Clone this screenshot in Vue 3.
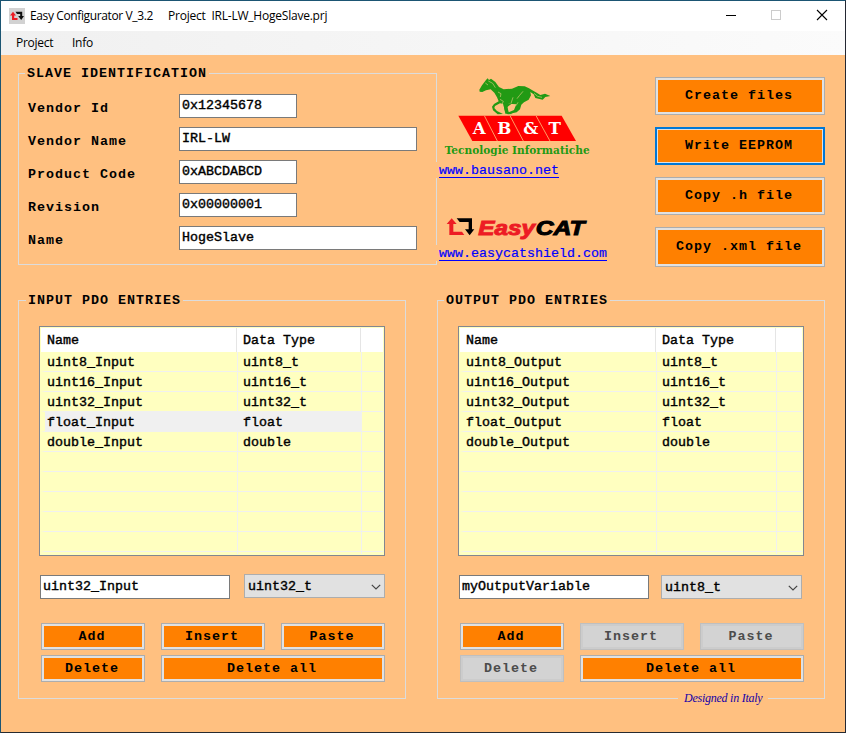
<script setup>
const fields = [
  { label: 'Vendor Id', value: '0x12345678', wide: false },
  { label: 'Vendor Name', value: 'IRL-LW', wide: true },
  { label: 'Product Code', value: '0xABCDABCD', wide: false },
  { label: 'Revision', value: '0x00000001', wide: false },
  { label: 'Name', value: 'HogeSlave', wide: true },
]

const actions = [
  { text: 'Create files' },
  { text: 'Write EEPROM', focused: true },
  { text: 'Copy .h file' },
  { text: 'Copy .xml file', tall: true },
]

const types = [
  ['uint8', 'uint8_t'],
  ['uint16', 'uint16_t'],
  ['uint32', 'uint32_t'],
  ['float', 'float'],
  ['double', 'double'],
]

function buildRows(suffix) {
  const rows = types.map(([n, t]) => ({ name: `${n}_${suffix}`, type: t }))
  while (rows.length < 10) rows.push({ name: '', type: '' })
  return rows
}

const groups = [
  {
    key: 'input', title: 'INPUT PDO ENTRIES', rows: buildRows('Input'), selected: 3,
    variable: 'uint32_Input', type: 'uint32_t', disabled: [],
  },
  {
    key: 'output', title: 'OUTPUT PDO ENTRIES', rows: buildRows('Output'), selected: -1,
    variable: 'myOutputVariable', type: 'uint8_t', disabled: ['Insert', 'Paste', 'Delete'],
  },
]
const buttons = ['Add', 'Insert', 'Paste', 'Delete', 'Delete all']
</script>

<template>
  <div class="window">
    <header class="titlebar">
      <svg class="app-icon" viewBox="0 0 16 16">
        <rect width="16" height="16" fill="#d2d2d2" />
        <path d="M1 7.5 4 3.8 7 7.5H5.2v2.6H8.5V12H3V7.5z" fill="#ed1c24" />
        <path d="M6.5 3.8H13.2V8H15l-2.8 4L9.2 8H11.2V6H8z" fill="#111" />
      </svg>
      <span class="app-title">Easy Configurator V_3.2</span>
      <span class="app-project">Project&nbsp; IRL-LW_HogeSlave.prj</span>
      <svg class="controls" viewBox="0 0 110 20">
        <path d="M4 9.5H14" stroke="#000" />
        <rect x="49.5" y="4.5" width="9" height="9" fill="none" stroke="#ccc" />
        <path d="M95 4 105 14M105 4 95 14" stroke="#000" stroke-width="1.1" />
      </svg>
    </header>
    <nav class="menubar"><span class="menu-project">Project</span><span class="menu-info">Info</span></nav>

    <main>
      <section class="top">
        <div class="group slave">
          <div class="legend">SLAVE IDENTIFICATION</div>
          <div class="fields">
            <div v-for="f in fields" :key="f.label" class="field">
              <label>{{ f.label }}</label>
              <div class="textbox" :class="{ wide: f.wide }">{{ f.value }}</div>
            </div>
          </div>
        </div>

        <div class="brands">
          <svg class="abt" viewBox="0 0 480 276">
            <g fill="#229a14">
              <path d="M118 53 126 40 138 24 143 19 147 24 153 20 166 30 177 45 191 52 216 50 235 42 254 43 267 49 277 55 290 62 301 69 315 65 331 72 316 75 308 83 286 78 281 67 271 60 273 70 266 83 252 91 244 98 240 112 230 121 207 126 203 122 222 114 229 97 206 95 202 105 206 120 213 126 196 125 190 96 180 94 165 102 163 108 171 117 189 126 173 127 159 115 156 104 162 96 176 88 171 76 163 62 152 52 138 55 127 60 119 59Z" />
              <path d="M190 96 214 96 202 105 203 119 218 126 203 127 194 115Z" />
            </g>
            <g fill="none" stroke="#d8ca78" stroke-width="2">
              <path d="M145 27 158 34 166 47M174 60 183 65 181 75M180 82 190 88 186 97M249 58 238 71 231 80M219 76 213 94M234 91 228 101M282 64 293 73 306 76M136 33 144 39" />
            </g>
            <path d="M55 131H365L408 207H97Z" fill="#f00" />
            <path d="M133 131 172 207M210 131 250 207M288 131 330 207" stroke="#ff9b62" stroke-width="3" />
            <g class="abt-letters" fill="#fff">
              <text x="118" y="186">A</text><text x="193" y="186">B</text><text x="272" y="186">&amp;</text><text x="344" y="186">T</text>
            </g>
            <text class="abt-name" x="14" y="247" textLength="435" lengthAdjust="spacingAndGlyphs">Tecnologie Informatiche</text>
          </svg>
          <a class="link">www.bausano.net</a>
          <svg class="easycat" viewBox="0 0 450 102">
            <path d="M20 42 35 25 50 42H40V65H66L73 75H28V42Z" fill="#ed1c24" />
            <path d="M50 25H96V58H103L89 76 75 58H86V36H59Z" fill="#000" />
            <text x="115" y="75" textLength="170" lengthAdjust="spacingAndGlyphs" fill="#ed1c24" stroke="#ed1c24">Easy</text>
            <text x="287" y="75" textLength="147" lengthAdjust="spacingAndGlyphs" fill="#000" stroke="#000">CAT</text>
          </svg>
          <a class="link">www.easycatshield.com</a>
        </div>

        <div class="actions">
          <button v-for="a in actions" :key="a.text" :class="{ focused: a.focused, tall: a.tall }"><span>{{ a.text }}</span></button>
        </div>
      </section>

      <section class="pdos">
        <div v-for="g in groups" :key="g.key" class="group pdo" :class="g.key">
          <div class="legend">{{ g.title }}</div>
          <div class="list">
            <div class="row head"><div>Name</div><div>Data Type</div><div></div></div>
            <div v-for="(r, i) in g.rows" :key="i" class="row" :class="{ selected: i === g.selected }">
              <div>{{ r.name }}</div><div>{{ r.type }}</div><div></div>
            </div>
            <div class="row rest"><div></div><div></div><div></div></div>
          </div>
          <div class="entry">
            <div class="textbox">{{ g.variable }}</div>
            <div class="select">
              <span>{{ g.type }}</span>
              <svg viewBox="0 0 10 6"><path d="M.8.8 5 5 9.2.8" fill="none" stroke="#444" stroke-width="1.2" /></svg>
            </div>
          </div>
          <div class="buttons">
            <button v-for="b in buttons" :key="b" :class="{ span2: b === 'Delete all' }" :disabled="g.disabled.includes(b)"><span>{{ b }}</span></button>
          </div>
          <div v-if="g.key === 'output'" class="credit">Designed in Italy</div>
        </div>
      </section>
    </main>
  </div>
</template>

<style>
body { margin: 0; overflow: hidden; }
</style>

<style scoped>
* { box-sizing: border-box; }
.window {
  width: 846px; height: 733px; border: 1px solid #1b5573; border-right-color: #242833; border-bottom-color: #262a30;
  background: #ffc080; color: #000; overflow: hidden;
  font: 13.33px/16px "Liberation Mono", "Courier New", monospace;
  -webkit-text-stroke: 0.4px currentColor;
}
.titlebar, .menubar, .brands svg, .credit { -webkit-text-stroke: 0; }
.titlebar {
  height: 30px; background: #fff; display: flex; align-items: center; padding-left: 8px;
  font: 12px/16px "Open Sans", "Noto Sans", sans-serif; white-space: pre;
}
.app-icon { width: 16px; height: 16px; margin-right: 5px; }
.app-title { width: 138px; letter-spacing: -0.38px; }
.app-project { letter-spacing: -0.22px; }
.controls { width: 110px; height: 20px; margin-left: auto; margin-right: 13px; }
.menubar {
  height: 24px; padding-left: 15px; display: flex; align-items: center;
  background: linear-gradient(90deg, #f0f0f0, #fbfbfb);
  font: 12px/16px "Open Sans", "Noto Sans", sans-serif; letter-spacing: -0.25px;
}
.menu-project { width: 56px; }
main { padding: 18px 20px 0 17px; }
.top { display: flex; height: 192px; }
.group { border: 1px solid #dcdcdc; }
.slave { width: 419px; height: 192px; }
.legend {
  width: max-content; height: 16px; margin: -9px 0 0 6px; padding: 1px 2px 0; background: #ffc080;
  font-weight: bold; font-size: 13.33px; letter-spacing: 1px; -webkit-text-stroke: 0;
}
.fields { display: grid; row-gap: 9px; padding: 13px 0 0 9px; }
.field { display: flex; height: 24px; }
.field label { width: 151px; padding-top: 7px; font-weight: bold; font-size: 13.33px; letter-spacing: 1px; -webkit-text-stroke: 0; }
.textbox { width: 118px; height: 24px; border: 1px solid #7a7a7a; background: #fff; padding: 3px 0 0 2px; }
.wide { width: 238px; }

.brands { width: 190px; display: flex; flex-direction: column; align-items: flex-start; margin-top: -1px; }
.brands svg { flex: none; display: block; margin-left: 3px; }
.abt { width: 160px; height: 92px; }
.abt-letters { font: bold 50px "DejaVu Serif", serif; text-anchor: middle; }
.abt-name { font: bold 34px "DejaVu Serif", serif; fill: #229a14; }
.link {
  height: 16px; margin: -2px 0 0 -1px; padding: 1px 0 0 3px; background: #ffc080;
  color: #00f; -webkit-text-stroke-width: 0.2px;
}
.link::after { content: ""; display: block; height: 1px; margin-top: -2px; background: #00f; }
.easycat { width: 150px; height: 34px; margin-top: 32px; }
.easycat text { font: italic bold 62px "Liberation Sans", sans-serif; stroke-width: 3px; }
.easycat + .link { margin-top: 1px; }

.actions { width: 170px; margin: 4px 0 0 auto; display: flex; flex-direction: column; gap: 12px; }
button {
  display: flex; align-items: center; justify-content: center; padding: 0;
  border: 1px solid #adadad; box-shadow: inset 0 0 0 2px #e1e1e1; background: #ff8000; color: #000;
  font: inherit; font-weight: bold; letter-spacing: 1px; -webkit-text-stroke: 0;
}
.actions button { flex: none; height: 38px; padding: 0 2px 0 0; }
.actions .tall { height: 40px; }
.actions .focused { border: 2px solid #0078d7; box-shadow: inset 0 0 0 1px #e1e1e1; }
button:disabled { border-color: #bfbfbf; box-shadow: inset 0 0 0 2px #ccc; background: #d3d3d3; color: #4c4c4c; }

.pdos { display: flex; justify-content: space-between; margin-top: 35px; }
.pdo { width: 388px; height: 399px; }
.pdo .legend { margin-left: 7px; }
.output .legend { margin-left: 6px; }
.list { width: 346px; height: 230px; margin: 18px 0 0 20px; padding: 1px; border: 1px solid #828790; background: #ffffc0; }
.row { display: grid; grid-template-columns: 197px 124px 1fr; height: 20px; }
.output .row { grid-template-columns: 197px 120px 1fr; }
.row > div { height: 100%; border-right: 1px solid #f0f0f0; border-bottom: 1px solid #f0f0f0; padding: 3px 0 0 5px; }
.row > div:first-child { border-left: 4px solid #ffffc0; padding-left: 2px; }
.row > div:last-child { border-right: 0; }
.row.head { grid-template-columns: 196px 124px 1fr; height: 24px; background: #fff; }
.output .row.head { grid-template-columns: 196px 120px 1fr; }
.row.head > div { border-bottom: 0; border-right-color: #e5e5e5; padding: 5px 0 0 6px; }
.row.head > div:first-child { border-left: 0; }
.row.head > div:last-child { border-right: 0; }
.row.rest { height: 2px; }
.row.rest > div { padding: 0; border-bottom: 0; }
.selected > div:nth-child(-n+2) { background: #f0f0f0; border-right-color: #f0f0f0; }

.entry { display: flex; align-items: flex-start; margin: 18px 0 0 21px; height: 25px; }
.entry .textbox { width: 190px; margin-top: 1px; }
.select {
  width: 141px; height: 24px; margin-left: 14px; padding: 1px 3px 0 3px; border: 1px solid #adadad; background: #e1e1e1;
  display: flex; align-items: center; justify-content: space-between;
}
.select svg { width: 10px; height: 6px; margin-top: 1px; }
.output .select { margin: 1px 0 0 12px; }
.buttons { display: grid; grid-template-columns: repeat(3, 104px); grid-auto-rows: 27px; gap: 5px 16px; margin: 24px 0 0 22px; }
.buttons .span2 { grid-column: span 2; }
.buttons button { padding: 1px 2px 0 0; }
.credit {
  width: 90px; height: 18px; margin: 7px 0 0 240px; padding-left: 6px; background: #ffc080; white-space: nowrap;
  font: italic 12px/18px "Liberation Serif", serif; letter-spacing: -0.25px; color: #1500a8;
}
</style>
